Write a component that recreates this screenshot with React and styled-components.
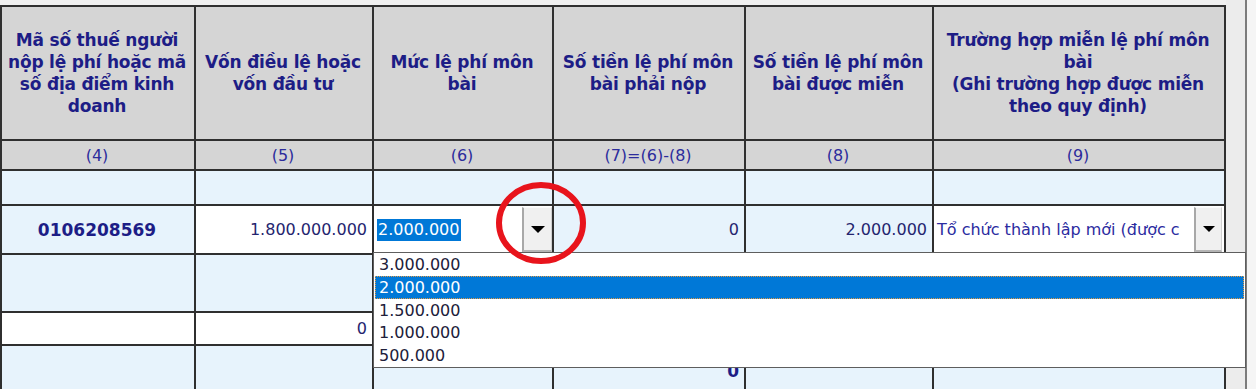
import React from 'react';
import styled, { createGlobalStyle } from 'styled-components';

const GlobalStyle = createGlobalStyle`
  html, body {
    margin: 0;
    padding: 0;
    background: #f0f0f0;
  }
  * {
    box-sizing: border-box;
  }
`;

const headers = [
  ['Mã số thuế người', 'nộp lệ phí hoặc mã', 'số địa điểm kinh', 'doanh'],
  ['Vốn điều lệ hoặc', 'vốn đầu tư'],
  ['Mức lệ phí môn', 'bài'],
  ['Số tiền lệ phí môn', 'bài phải nộp'],
  ['Số tiền lệ phí môn', 'bài được miễn'],
  ['Trường hợp miễn lệ phí môn', 'bài', '(Ghi trường hợp được miễn', 'theo quy định)'],
];

const numbers = ['(4)', '(5)', '(6)', '(7)=(6)-(8)', '(8)', '(9)'];

const options = ['3.000.000', '2.000.000', '1.500.000', '1.000.000', '500.000'];

export default function App() {
  return (
    <>
      <GlobalStyle />
      <Page>
        <TableArea>
          <Grid>
            {headers.map((lines, i) => (
              <Cell key={'h' + i} $tone="head" $align="center">
                <HeaderText>
                  {lines.map((l, j) => (
                    <div key={j}>{l}</div>
                  ))}
                </HeaderText>
              </Cell>
            ))}

            {numbers.map((n) => (
              <Cell key={n} $tone="head" $align="center">
                <NumText>{n}</NumText>
              </Cell>
            ))}

            {numbers.map((n) => (
              <Cell key={'e' + n} $tone="blue" />
            ))}

            {/* data row */}
            <Cell $tone="blue" $align="center">
              <StrongValue>0106208569</StrongValue>
            </Cell>
            <Cell $tone="white" $align="flex-end">
              <Value>1.800.000.000</Value>
            </Cell>
            <ComboCell>
              <ComboText>
                <Selected>2.000.000</Selected>
              </ComboText>
              <DropButton>
                <Arrow />
              </DropButton>
            </ComboCell>
            <Cell $tone="blue" $align="flex-end">
              <Value>0</Value>
            </Cell>
            <Cell $tone="blue" $align="flex-end">
              <Value>2.000.000</Value>
            </Cell>
            <ComboCell>
              <ComboText>
                <Value $color="#2b2ba0">Tổ chức thành lập mới (được c</Value>
              </ComboText>
              <DropButton $small>
                <Arrow $small />
              </DropButton>
            </ComboCell>

            {numbers.map((n) => (
              <Cell key={'f' + n} $tone="blue" />
            ))}

            <Cell $tone="white" />
            <Cell $tone="white" $align="flex-end">
              <Value>0</Value>
            </Cell>
            {numbers.slice(2).map((n) => (
              <Cell key={'g' + n} $tone="blue" />
            ))}

            <Cell $tone="blue" />
            <Cell $tone="blue" />
            <Cell $tone="blue" />
            <Cell $tone="blue" $align="flex-end" $top>
              <StrongValue>0</StrongValue>
            </Cell>
            <Cell $tone="blue" />
            <Cell $tone="blue" />
          </Grid>
        </TableArea>
        <Gutter />
        <Rest />

        <DropList>
          {options.map((o) => (
            <Option key={o} $active={o === '2.000.000'}>
              {o}
            </Option>
          ))}
        </DropList>

        <Ring width="100" height="90" viewBox="0 0 100 90">
          <ellipse cx="50" cy="45" rx="42" ry="38" fill="none" stroke="#e8141c" strokeWidth="6" />
        </Ring>
      </Page>
    </>
  );
}

// --- STYLED COMPONENTS ---

const Page = styled.div`
  position: relative;
  display: flex;
  width: 1256px;
  height: 389px;
  overflow: hidden;
  background: #f0f0f0;
  font-family: 'DejaVu Sans', Verdana, sans-serif;
`;

const TableArea = styled.div`
  padding: 5px 0 0 2px;
`;

const Grid = styled.div`
  display: grid;
  grid-template-columns: 194px 178px 180px 192px 188px 292px;
  grid-template-rows: 134px 30px 35px 49px 58px 33px 60px;
  border-left: 2px solid #2f2f2f;
  border-top: 2px solid #2f2f2f;
  margin-left: -2px;
`;

const tones = {
  head: '#d5d5d5',
  blue: '#e7f3fc',
  white: '#ffffff',
};

const Cell = styled.div`
  display: flex;
  align-items: ${(p) => (p.$top ? 'flex-start' : 'center')};
  justify-content: ${(p) => p.$align || 'flex-start'};
  padding: ${(p) => (p.$top ? '15px 5px 0 3px' : '0 5px 0 3px')};
  background: ${(p) => tones[p.$tone] || tones.blue};
  border-right: 2px solid #2f2f2f;
  border-bottom: 2px solid #2f2f2f;
  overflow: hidden;
`;

const HeaderText = styled.div`
  font-weight: bold;
  font-size: 17px;
  line-height: 22px;
  color: #1d1d86;
  text-align: center;
  white-space: nowrap;
  letter-spacing: -0.2px;
`;

const NumText = styled.span`
  font-size: 16px;
  color: #2c2c9c;
`;

const Value = styled.span`
  font-size: 16px;
  color: ${(p) => p.$color || '#24246e'};
  white-space: nowrap;
`;

const StrongValue = styled.span`
  font-size: 17px;
  font-weight: bold;
  color: #1d1d86;
`;

const ComboCell = styled.div`
  display: flex;
  align-items: stretch;
  background: #ffffff;
  border-right: 2px solid #2f2f2f;
  border-bottom: 2px solid #2f2f2f;
  overflow: hidden;
`;

const ComboText = styled.div`
  flex: 1;
  display: flex;
  align-items: center;
  padding-left: 3px;
  overflow: hidden;
  white-space: nowrap;
`;

const Selected = styled.span`
  font-size: 16px;
  line-height: 22px;
  padding: 0 2px 0 1px;
  background: #0078d7;
  color: #ffffff;
`;

const DropButton = styled.div`
  width: ${(p) => (p.$small ? '28px' : '30px')};
  margin: 1px ${(p) => (p.$small ? '2px' : '0')} 1px 0;
  display: flex;
  align-items: center;
  justify-content: center;
  background: #f0f0f0;
  border-left: 2px solid #a8a8a8;
  border-right: 1px solid #d0d0d0;
  border-bottom: 2px solid #b4b4b4;
  border-top: 1px solid #fafafa;
`;

const Arrow = styled.span`
  width: 0;
  height: 0;
  border-left: ${(p) => (p.$small ? '6px' : '7px')} solid transparent;
  border-right: ${(p) => (p.$small ? '6px' : '7px')} solid transparent;
  border-top: ${(p) => (p.$small ? '6px' : '7px')} solid #000;
`;

const Gutter = styled.div`
  width: 21px;
  height: 100%;
  background: #ececec;
  border-right: 2px solid #7c7c7c;
`;

const Rest = styled.div`
  flex: 1;
  background: #f5f5f5;
`;

const DropList = styled.div`
  position: absolute;
  left: 373px;
  top: 252px;
  width: 873px;
  height: 116px;
  padding: 0 1px;
  background: #ffffff;
  border: 1px solid #5e5e5e;
  z-index: 2;
`;

const Option = styled.div`
  height: 22.8px;
  line-height: 21px;
  padding-left: 3px;
  font-size: 16px;
  color: ${(p) => (p.$active ? '#ffffff' : '#20203a')};
  background: ${(p) => (p.$active ? '#0078d7' : 'transparent')};
  border: 1px dotted ${(p) => (p.$active ? '#e39a45' : 'transparent')};
`;

const Ring = styled.svg`
  position: absolute;
  left: 491px;
  top: 178px;
  z-index: 3;
`;
